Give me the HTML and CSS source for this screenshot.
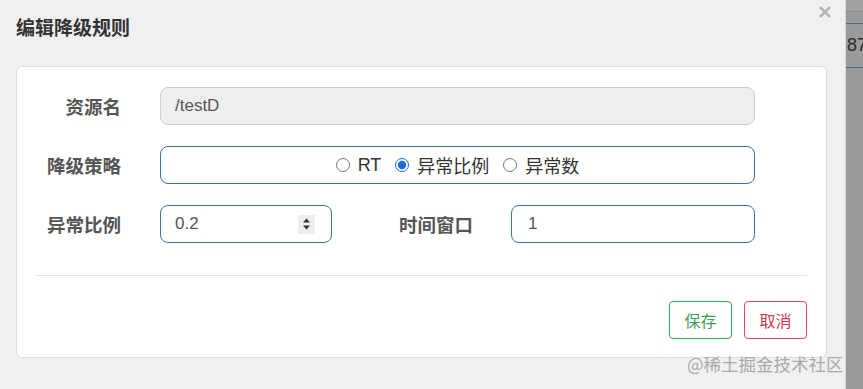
FILE: index.html
```html
<!DOCTYPE html>
<html lang="zh-CN">
<head>
<meta charset="utf-8">
<title>编辑降级规则</title>
<link rel="stylesheet" href="styles.css">
</head>
<body>
<div class="screen">
  <div class="modal">
    <div class="modal-header">
      <h3 class="title">编辑降级规则</h3>
      <button class="close" aria-label="close">
        <svg width="14" height="14" viewBox="0 0 14 14"><path d="M2 2L12 12M12 2L2 12" stroke="#b3b3b3" stroke-width="2.6" stroke-linecap="butt"/></svg>
      </button>
    </div>
    <div class="card">
      <div class="form">
        <div class="row">
          <label class="label">资源名</label>
          <div class="field field-disabled wide">/testD</div>
        </div>
        <div class="row">
          <label class="label">降级策略</label>
          <div class="field field-active wide radios">
            <label class="radio"><input type="radio" name="grade"><span>RT</span></label>
            <label class="radio"><input type="radio" name="grade" checked><span>异常比例</span></label>
            <label class="radio"><input type="radio" name="grade"><span>异常数</span></label>
          </div>
        </div>
        <div class="row">
          <label class="label">异常比例</label>
          <div class="field field-active narrow">
            <span class="value">0.2</span>
            <span class="spinner">
              <svg width="9" height="14" viewBox="0 0 9 14"><path d="M4.5 1.5L8 5.5H1Z" fill="#333"/><path d="M4.5 12.5L8 8.5H1Z" fill="#333"/></svg>
            </span>
          </div>
          <label class="label label-mid">时间窗口</label>
          <div class="field field-active medium">1</div>
        </div>
      </div>
      <div class="divider"></div>
      <div class="footer">
        <button class="btn btn-save">保存</button>
        <button class="btn btn-cancel">取消</button>
      </div>
    </div>
  </div>
  <div class="behind">
    <div class="behind-top"></div>
    <div class="behind-line"></div>
    <div class="behind-cell">87</div>
  </div>
  <div class="watermark">@稀土掘金技术社区</div>
</div>
</body>
</html>
```
FILE: styles.css
```css
* { box-sizing: border-box; }
html, body {
  margin: 0;
  padding: 0;
}
body {
  font-family: "Liberation Sans", "Noto Sans CJK SC", sans-serif;
  width: 863px;
  height: 389px;
  overflow: hidden;
}
.screen {
  display: flex;
  width: 863px;
  height: 389px;
  position: relative;
}
.modal {
  flex: 0 0 846px;
  width: 846px;
  height: 389px;
  background: #f0f0f0;
  border-right: 1px solid #d6d6d6;
}
.modal-header {
  display: flex;
  justify-content: space-between;
  height: 66px;
  padding: 16px 0 0 16px;
}
.title {
  margin: 0;
  font-size: 19px;
  line-height: 22px;
  font-weight: bold;
  color: #333;
  font-family: "Noto Sans CJK SC", sans-serif;
}
.close {
  border: 0;
  background: none;
  padding: 0;
  width: 14px;
  height: 14px;
  margin: -11px 13px 0 0;
  display: flex;
}
.card {
  margin: 0 18px 0 16px;
  background: #fff;
  border: 1px solid #dcdcdc;
  border-radius: 6px;
  height: 292px;
  padding-top: 20px;
}
.form {
  display: flex;
  flex-direction: column;
  gap: 21px;
}
.row {
  display: flex;
  align-items: center;
  height: 38px;
}
.label {
  width: 104px;
  margin-right: 39px;
  text-align: right;
  font-family: "Noto Sans CJK SC", sans-serif;
  font-weight: bold;
  font-size: 18.5px;
  color: #555;
}
.label-mid {
  width: 141px;
  margin-right: 38px;
}
.field {
  height: 38px;
  border-radius: 8px;
  display: flex;
  align-items: center;
  padding: 0 14px;
  font-size: 17px;
  color: #555;
  background: #fff;
}
.field-disabled {
  background: #eee;
  border: 1px solid #ccc;
}
.field-active {
  border: 1px solid #3a76ab;
}
.wide { width: 595px; }
.narrow { width: 172px; justify-content: space-between; padding-right: 16px; }
.medium { width: 244px; padding-left: 16px; }
.radios {
  justify-content: center;
  gap: 14px;
  padding: 0;
  color: #333;
  font-family: "Liberation Sans", "Noto Sans CJK SC", sans-serif;
  font-size: 18px;
}
.radio {
  display: flex;
  align-items: center;
  gap: 8px;
}
.radio input {
  margin: 0;
  width: 14px;
  height: 14px;
  accent-color: #1a6fe0;
}
.spinner {
  width: 17px;
  height: 19px;
  background: #eee;
  display: flex;
  align-items: center;
  justify-content: center;
}
.divider {
  margin: 32px 19px 0;
  height: 1px;
  background: #e3e3e3;
}
.footer {
  display: flex;
  justify-content: flex-end;
  gap: 12px;
  padding: 25px 19px 0 0;
}
.btn {
  height: 38px;
  width: 63px;
  background: #fff;
  border-radius: 4px;
  font-family: "Noto Sans CJK SC", sans-serif;
  font-size: 16px;
  padding: 0;
}
.btn-save {
  border: 1px solid #3ea55a;
  color: #3e9e55;
}
.btn-cancel {
  border: 1px solid #d24a5c;
  color: #cc3a4f;
}
.behind {
  flex: 1 1 auto;
  min-width: 0;
  overflow: hidden;
  background: #9a9a9a;
}
.behind-top {
  height: 12px;
  background: #a2a2a2;
  border-bottom: 1px solid #8a8a8a;
}
.behind-line {
  height: 12px;
  border-bottom: 1px solid #4d6f8c;
}
.behind-cell {
  height: 44px;
  border-bottom: 1px solid #4d6f8c;
  font-size: 18px;
  color: #2e2e2e;
  padding-top: 11px;
  padding-left: 1px;
  white-space: nowrap;
}
.watermark {
  position: absolute;
  left: 687px;
  top: 351px;
  font-family: "Noto Sans CJK SC", sans-serif;
  font-size: 17.5px;
  color: #a9a9a9;
  white-space: nowrap;
}
```
